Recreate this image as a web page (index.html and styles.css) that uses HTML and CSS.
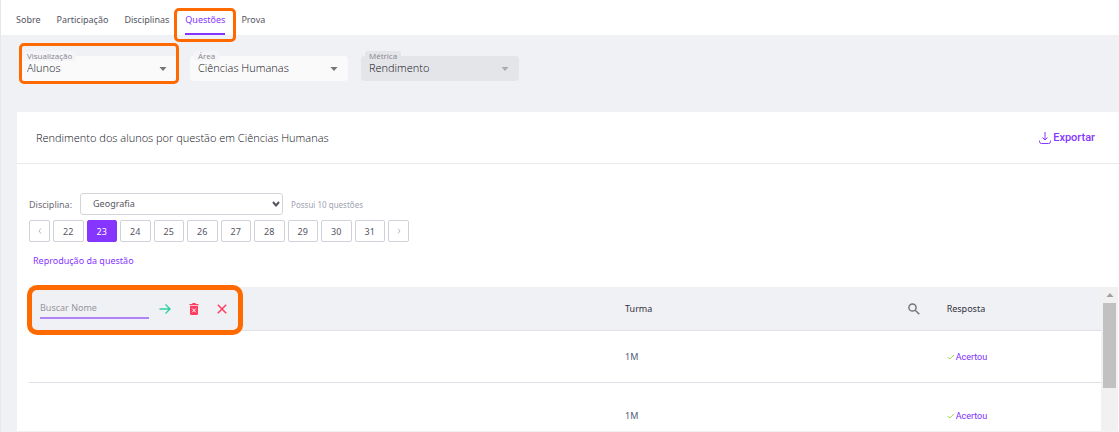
FILE: index.html
```html
<!DOCTYPE html>
<html lang="pt-BR">

    <head>

        <meta charset="utf-8">
        <title>Questões</title>

        <link rel="stylesheet" href="styles.css">

    </head>

    <body>

        <nav class="tabs">
            <a class="tab" href="#sobre">Sobre</a>
            <a class="tab" href="#participacao">Participação</a>
            <a class="tab" href="#disciplinas">Disciplinas</a>
            <a class="tab active" href="#questoes">Questões<span class="mark mark-tab"></span></a>
            <a class="tab" href="#prova">Prova</a>
        </nav>

        <div class="filters">

            <div class="field">
                <label for="visualizacao">Visualização</label>
                <select id="visualizacao">
                    <option>Alunos</option>
                </select>
                <svg class="caret" viewBox="0 0 8 4"><path d="M0.5 0h7L4 4z"/></svg>
                <span class="mark mark-field"></span>
            </div>

            <div class="field">
                <label for="area">Área</label>
                <select id="area">
                    <option>Ciências Humanas</option>
                </select>
                <svg class="caret" viewBox="0 0 8 4"><path d="M0.5 0h7L4 4z"/></svg>
            </div>

            <div class="field disabled">
                <label for="metrica">Métrica</label>
                <select id="metrica" disabled>
                    <option>Rendimento</option>
                </select>
                <svg class="caret" viewBox="0 0 8 4"><path d="M0.5 0h7L4 4z"/></svg>
            </div>

        </div>

        <main class="card">

            <div class="card-top">
                <h1>Rendimento dos alunos por questão em Ciências Humanas</h1>
                <button class="export">
                    <svg viewBox="0 0 12 12" width="12" height="12"><path d="M6 0v8M3.500 5.500L6 8l2.500-2.500M0.500 8.500v1q0 2 2 2h7q2 0 2-2v-1"/></svg>
                    Exportar
                </button>
            </div>

            <div class="controls">

                <div class="subject">
                    <label for="disciplina">Disciplina:</label>
                    <div class="subject-box">
                        <select id="disciplina">
                            <option>Geografia</option>
                        </select>
                        <svg class="chevron" viewBox="0 0 8 6"><path d="M1 1l3 3.500L7 1"/></svg>
                    </div>
                    <span class="count">Possui 10 questões</span>
                </div>

                <div class="pages">
                    <button class="step" aria-label="Anterior"><svg viewBox="0 0 4 6"><path d="M3 0.500L1 3l2 2.500"/></svg></button>
                    <button>22</button>
                    <button class="current">23</button>
                    <button>24</button>
                    <button>25</button>
                    <button>26</button>
                    <button>27</button>
                    <button>28</button>
                    <button>29</button>
                    <button>30</button>
                    <button>31</button>
                    <button class="step" aria-label="Próxima"><svg viewBox="0 0 4 6"><path d="M1 0.500L3 3L1 5.500"/></svg></button>
                </div>

                <a class="reproduce" href="#reproducao">Reprodução da questão</a>

            </div>

            <div class="list">

                <div class="table-wrap">
                    <table>
                        <thead>
                            <tr>
                                <th class="col-name">
                                    <div class="search">
                                        <input type="text" placeholder="Buscar Nome" aria-label="Buscar Nome">
                                        <button class="go" aria-label="Buscar"><svg viewBox="0 0 12 12" width="12" height="12"><path d="M0.500 6h10.500M6.500 1.500L11 6l-4.500 4.500"/></svg></button>
                                        <button class="trash" aria-label="Limpar"><svg viewBox="0 0 10 12" width="10" height="12"><path class="fill" d="M0.500 1h2.500L3.700 0h2.600L7 1h2.500v1.300h-9zM1 3h8v7.800q0 1.200-1.200 1.200H2.200Q1 12 1 10.800z"/><path class="cross" d="M3.200 5.500l3.600 3.800M6.800 5.500L3.200 9.300"/></svg></button>
                                        <button class="close" aria-label="Fechar"><svg viewBox="0 0 10 10" width="10" height="10"><path d="M0.800 0.800l8.400 8.400M9.200 0.800L0.800 9.200"/></svg></button>
                                        <span class="mark mark-search"></span>
                                    </div>
                                </th>
                                <th class="col-class">
                                    <div class="class-head">
                                        Turma
                                        <button class="find" aria-label="Buscar turma"><svg viewBox="0 0 12 12" width="12" height="12"><circle cx="4.500" cy="4.500" r="3.600"/><path d="M7.300 7.300l4 4"/></svg></button>
                                    </div>
                                </th>
                                <th class="col-answer">Resposta</th>
                            </tr>
                        </thead>
                        <tbody>
                            <tr class="first">
                                <td></td>
                                <td>1M</td>
                                <td><a class="answer" href="#resposta"><svg viewBox="0 0 8 6" width="8" height="6"><path d="M0.800 3l2 2L7.200 0.800"/></svg>Acertou</a></td>
                            </tr>
                            <tr>
                                <td></td>
                                <td>1M</td>
                                <td><a class="answer" href="#resposta"><svg viewBox="0 0 8 6" width="8" height="6"><path d="M0.800 3l2 2L7.200 0.800"/></svg>Acertou</a></td>
                            </tr>
                        </tbody>
                    </table>
                </div>

                <div class="scrollbar">
                    <svg viewBox="0 0 8 4" width="8" height="4"><path d="M0.500 4h7L4 0z"/></svg>
                    <div class="thumb"></div>
                </div>

            </div>

        </main>

    </body>

</html>
```

FILE: styles.css
```css
* {
    box-sizing: border-box;
}

body {
    margin: 0;
    height: 100vh;
    display: flex;
    flex-direction: column;
    overflow: hidden;
    padding-bottom: 1px;
    border-left: 1px solid #e6e7ec;
    background-color: #f0f1f5;
    color: #32323c;
    font-family: "Noto Sans", "Open Sans", sans-serif;
    font-size: 9px;
}

button, input, select {
    font: inherit;
    color: inherit;
    margin: 0;
}

button {
    padding: 0;
    border: 0;
    background: none;
}

a {
    text-decoration: none;
}

svg {
    display: block;
    fill: none;
}

/* orange highlights */

.mark {
    position: absolute;
    border: 3px solid #ff6a00;
    border-radius: 5px;
    pointer-events: none;
    z-index: 2;
}

.mark-tab {
    inset: 8px -11px -9px;
}

.mark-field {
    inset: -13px -2px -3px 0;
}

.mark-search {
    inset: -2px -2px -5px;
    border-width: 5px;
    border-radius: 10px;
}

/* tabs */

.tabs {
    display: flex;
    gap: 16px;
    height: 35px;
    flex: none;
    padding-left: 15px;
    background-color: #fff;
}

.tab {
    position: relative;
    padding-top: 6px;
    line-height: 28px;
    color: #55555f;
}

.tab.active {
    color: #8635ff;
    border-bottom: 2px solid #8635ff;
}

/* filters */

.filters {
    display: flex;
    gap: 13px;
    flex: none;
    padding: 21px 18px 31px;
}

.field {
    position: relative;
    width: 158px;
    height: 25px;
    background-color: #fafafa;
    border-radius: 4px;
}

.field.disabled {
    background-color: #e4e5e9;
}

.field label {
    position: absolute;
    top: -5px;
    left: 4px;
    padding: 0 4px;
    border-radius: 3px;
    background-color: #f5f5f8;
    font-family: "Open Sans", sans-serif;
    font-size: 8px;
    line-height: 10px;
    color: #85858c;
}

.field.disabled label {
    background-color: #e4e5e9;
}

.field select {
    width: 100%;
    height: 100%;
    padding: 0 24px 2px 8px;
    border: 0;
    background: none;
    appearance: none;
    font-family: "Open Sans", sans-serif;
    font-size: 11px;
    font-weight: 300;
    color: #101018;
    opacity: 1;
}

.caret {
    position: absolute;
    top: 11px;
    right: 10px;
    width: 8px;
    height: 4px;
    fill: #74757a;
    pointer-events: none;
}

.disabled .caret {
    fill: #aaabb0;
}

/* card */

.card {
    flex: 1;
    min-height: 0;
    display: flex;
    flex-direction: column;
    overflow: hidden;
    margin-left: 16px;
    background-color: #fff;
    border-radius: 2px 0 0 0;
}

.card-top {
    display: flex;
    justify-content: space-between;
    align-items: center;
    height: 52px;
    flex: none;
    padding: 0 24px 0 19px;
    border-bottom: 1px solid #e9e9ee;
}

.card-top h1 {
    margin: 0;
    font-family: "Open Sans", sans-serif;
    font-size: 11px;
    font-weight: 300;
    color: #101018;
}

.export {
    display: flex;
    align-items: center;
    gap: 2px;
    font-family: Roboto, sans-serif;
    font-size: 11px;
    font-weight: 500;
    color: #8635ff;
}

.export svg {
    stroke: #8635ff;
}

.controls {
    flex: none;
    padding: 29px 12px 19px;
}

.subject {
    display: flex;
    align-items: center;
    gap: 8px;
    color: #6b6b74;
}

.subject-box {
    position: relative;
    width: 203px;
}

.subject select {
    display: block;
    width: 100%;
    height: 22px;
    padding: 0 24px 2px 12px;
    border: 1px solid #d4d5da;
    border-radius: 3px;
    background-color: #fff;
    appearance: none;
    color: #55555f;
}

.chevron {
    position: absolute;
    top: 8px;
    right: 3px;
    width: 8px;
    height: 6px;
    stroke: #55555f;
    stroke-width: 2;
    pointer-events: none;
}

.count {
    font-size: 8px;
    color: #a0a3b0;
}

.pages {
    display: grid;
    grid-template-columns: 21px repeat(10, 1fr) 21px;
    gap: 3px;
    width: 380px;
    margin-top: 5px;
}

.pages button {
    height: 22px;
    border: 1px solid #d0d1d9;
    border-radius: 2px;
    background-color: #fff;
    color: #55555f;
}

.pages .current {
    border-color: #8635ff;
    background-color: #8635ff;
    color: #fff;
}

.step svg {
    width: 4px;
    height: 6px;
    margin: 0 auto;
    stroke: #b9bac4;
}

.reproduce {
    display: block;
    width: fit-content;
    margin-top: 12px;
    padding-left: 4px;
    line-height: 14px;
    color: #8635ff;
}

/* student list */

.list {
    flex: 1;
    min-height: 0;
    display: flex;
    padding: 0 1px 0 12px;
}

.table-wrap {
    flex: 1;
}

table {
    width: 100%;
    table-layout: fixed;
    border-collapse: collapse;
}

th, td {
    padding: 0;
    border-bottom: 1px solid #dfe0e5;
    text-align: left;
    font-weight: normal;
}

th {
    height: 43px;
    background-color: #f0f1f5;
}

td {
    height: 66px;
    color: #4f6078;
}

.first td {
    height: 52px;
}

.col-name {
    width: 55.6%;
}

.col-class {
    width: 30%;
}

.search {
    position: relative;
    display: flex;
    align-items: center;
    width: 212px;
    height: 43px;
    padding-left: 11px;
}

.search input {
    width: 109px;
    height: 20px;
    margin-right: 10px;
    padding: 0;
    border: 0;
    border-bottom: 2px solid #b084f9;
    background: none;
    outline: none;
}

.search input::placeholder {
    color: #96969e;
    opacity: 1;
}

.search button {
    margin-right: 18px;
}

.go svg {
    stroke: #2fd0a0;
    stroke-width: 1.4;
}

.trash .fill {
    fill: #ff3d60;
}

.trash .cross {
    stroke: #fff;
}

.close svg {
    stroke: #ff3d60;
    stroke-width: 1.5;
}

.class-head {
    display: flex;
    align-items: center;
    justify-content: space-between;
    padding-right: 27px;
}

.find svg {
    stroke: #74757a;
    stroke-width: 1.5;
}

.answer {
    display: flex;
    align-items: center;
    gap: 1px;
    font-family: Roboto, sans-serif;
    color: #7a2cff;
}

.answer svg {
    stroke: #92dc4c;
}

.scrollbar {
    width: 17px;
    padding: 6px 2px 0;
    background-color: #f1f1f1;
}

.scrollbar svg {
    margin: 0 auto 6px;
    fill: #a0a0a0;
}

.thumb {
    height: 85px;
    background-color: #c1c1c1;
}
```
